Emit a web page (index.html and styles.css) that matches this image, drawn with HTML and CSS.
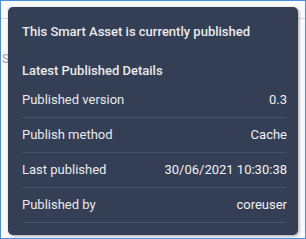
FILE: index.html
```html
<!DOCTYPE html>
<html>
<head>
<meta charset="utf-8">
<link rel="stylesheet" href="styles.css">
</head>
<body>
<div class="frame">
  <div class="page">
    <div class="rule"></div>
    <div class="behind">S</div>
  </div>
  <div class="tooltip">
    <div class="title">This Smart Asset is currently published</div>
    <div class="subtitle">Latest Published Details</div>
    <div class="row"><span class="label">Published version</span><span class="value">0.3</span></div>
    <div class="row"><span class="label">Publish method</span><span class="value">Cache</span></div>
    <div class="row"><span class="label">Last published</span><span class="value">30/06/2021 10:30:38</span></div>
    <div class="row"><span class="label">Published by</span><span class="value">coreuser</span></div>
  </div>
</div>
</body>
</html>
```

FILE: styles.css
```css
html, body {
  margin: 0;
  padding: 0;
}
body {
  width: 306px;
  height: 239px;
  overflow: hidden;
  font-family: Roboto, "Liberation Sans", sans-serif;
}
.frame {
  position: relative;
  box-sizing: border-box;
  width: 306px;
  height: 239px;
  border: 1px solid #4a90e2;
  background: #f8f9fb;
}
.page {
  padding-top: 17px;
}
.rule {
  height: 1px;
  background: #d3d6dc;
}
.behind {
  margin: 32px 0 0 1px;
  font-size: 13px;
  line-height: 16px;
  color: #9aa0aa;
}
.tooltip {
  position: absolute;
  left: 7px;
  top: 6px;
  width: 290px;
  height: 228px;
  box-sizing: border-box;
  padding: 17px 11px 0 14px;
  background: #343e55;
  border-radius: 5px;
  box-shadow: 1px 1px 3px rgba(0, 0, 0, 0.35);
  color: #e8eaee;
  font-size: 13px;
  line-height: 16px;
}
.title {
  font-weight: 500;
}
.subtitle {
  font-weight: 500;
  margin-top: 23px;
  margin-bottom: 4px;
}
.row {
  display: flex;
  justify-content: space-between;
  padding: 9px 0;
  border-bottom: 1px solid #46506a;
}
.label, .value {
  white-space: nowrap;
}
.value {
  color: #f0f1f4;
}
```
